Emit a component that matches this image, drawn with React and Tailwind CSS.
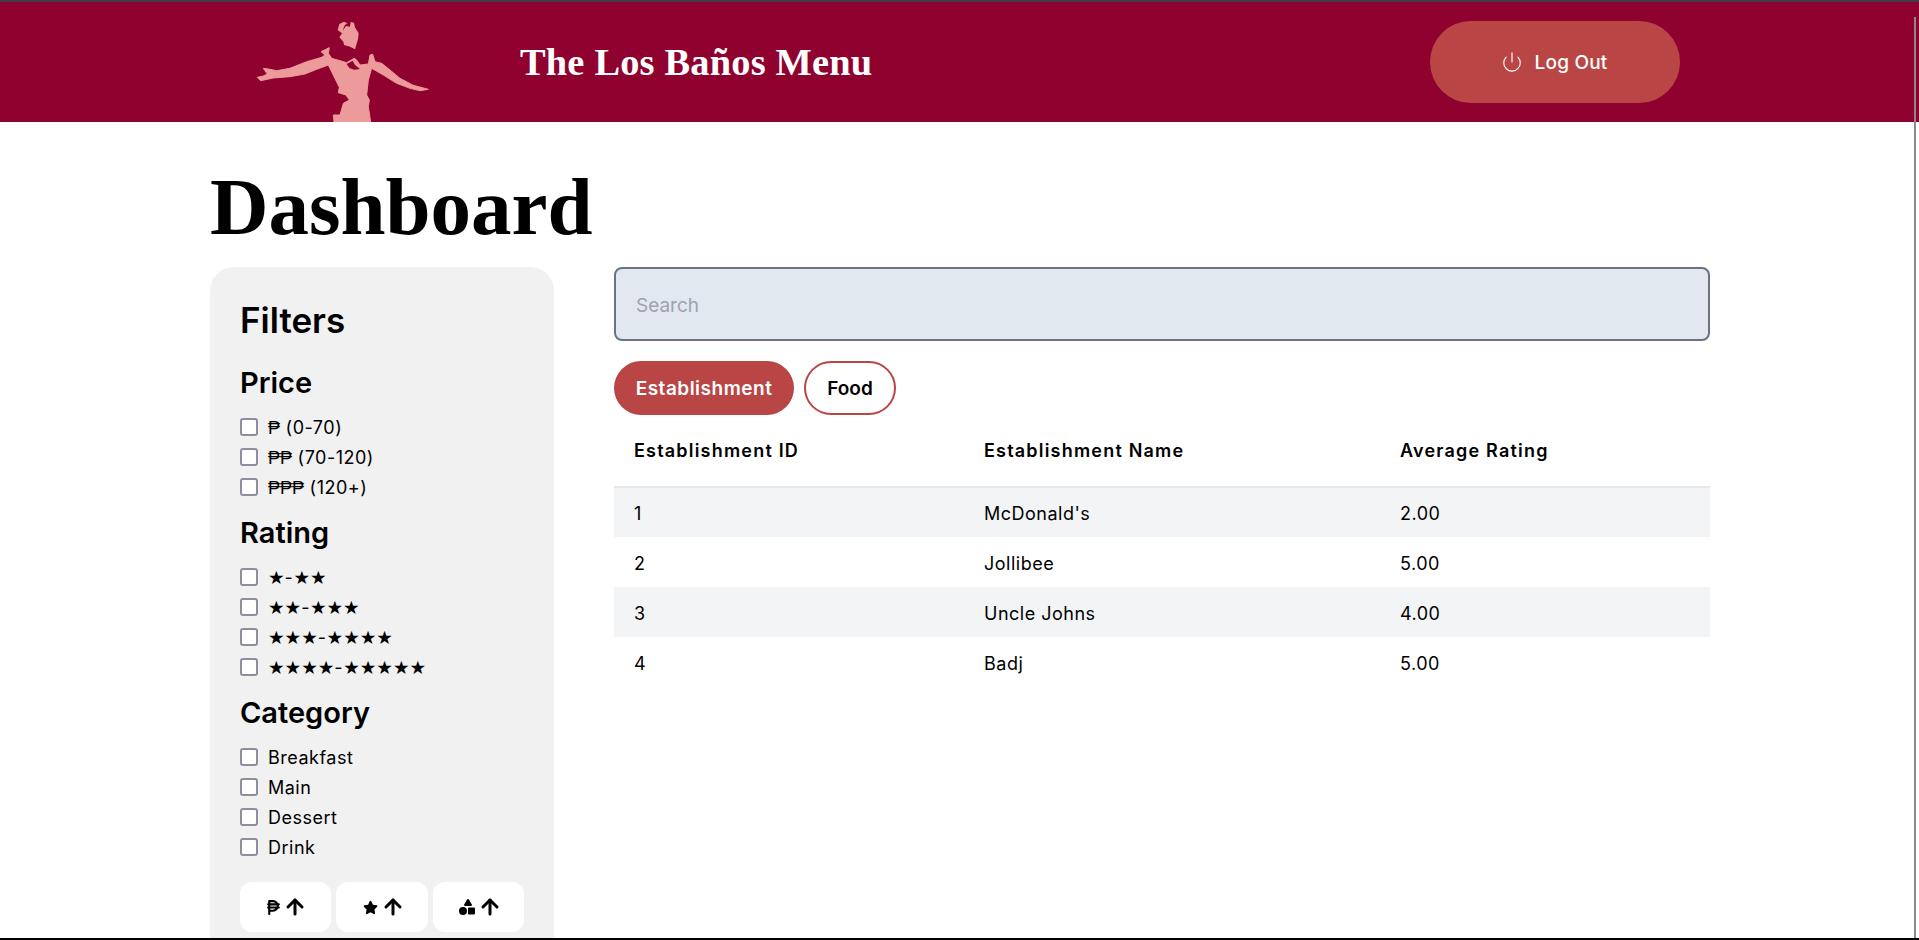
import { ArrowUp, Power } from 'lucide-react';
import { FaPesoSign, FaShapes, FaStar } from 'react-icons/fa6';

const rows = [
  { id: 1, name: "McDonald's", rating: '2.00' },
  { id: 2, name: 'Jollibee', rating: '5.00' },
  { id: 3, name: 'Uncle Johns', rating: '4.00' },
  { id: 4, name: 'Badj', rating: '5.00' },
];

function Statue() {
  return (
    <svg viewBox="0 6 630 360" className="h-[120px] w-[210px] shrink-0">
      <path
        fill="#ec9a9a"
        d="M293 90 L298 72 L312 65 L322 70 L314 76 L308 92 L318 78 L330 80 L332 66 L342 68 L345 82 L356 100 L354 118 L345 148 L330 140 L312 135 L310 125 L298 112 L306 100 Z"
      />
      <path
        fill="#ec9a9a"
        stroke="#ec9a9a"
        strokeWidth="3"
        d="M52 232 L70 228 L82 222 L70 205 L85 207 L110 212 L150 205 L200 185 L225 178 L245 172 L255 165 L243 155 L268 143 L265 160 L275 175 L300 182 L320 188 L342 175 L348 178 L360 195 L385 192 L390 165 L398 163 L405 185 L425 190 L450 210 L480 235 L520 256 L565 268 L540 272 L510 265 L470 250 L430 225 L395 205 L385 240 L380 285 L388 300 L385 320 L392 366 L282 366 L280 345 L300 345 L310 310 L328 300 L318 285 L295 278 L298 262 L265 195 L230 208 L195 222 L150 230 L100 234 L62 242 Z"
      />
      <path fill="#8f022f" d="M320 192 L338 182 L345 195 L360 207 L342 209 L328 204 Z" />
    </svg>
  );
}

function Check({ children }) {
  return (
    <label className="flex h-[30px] items-center gap-[10px] text-[18px] leading-[30px] tracking-[0.5px]">
      <span className="h-[18px] w-[18px] shrink-0 rounded-[3px] border-2 border-[#8f8d9f] bg-white" />
      <span className="pt-[2px]">{children}</span>
    </label>
  );
}

function Stars({ from, to }) {
  return (
    <span>
      <span className="font-['DejaVu_Sans',sans-serif] text-[18.5px] tracking-normal">{'★'.repeat(from)}</span>-
      <span className="font-['DejaVu_Sans',sans-serif] text-[18.5px] tracking-normal">{'★'.repeat(to)}</span>
    </span>
  );
}

function Peso({ count, label }) {
  return (
    <span>
      <span className="font-['Liberation_Sans',sans-serif] tracking-normal">{'₱'.repeat(count)}</span> {label}
    </span>
  );
}

function SortButton({ icon, className }) {
  return (
    <button className={`flex h-[50px] items-center justify-center gap-[6px] rounded-[12px] bg-white ${className}`}>
      {icon}
      <ArrowUp size={24} strokeWidth={3} className="-mx-[3px]" />
    </button>
  );
}

function FilterHeading({ children }) {
  return <h3 className="mt-[12px] mb-[12px] h-9 pt-[1px] text-[29px] leading-9 font-semibold">{children}</h3>;
}

export default function App() {
  return (
    <div className="h-screen overflow-hidden border-t-2 border-[#3f3f46] bg-white font-['Inter',sans-serif] text-black">
      <header className="flex h-[120px] items-center bg-[#8f022f] pl-[240px]">
        <Statue />
        <h1 className="ml-[70px] w-[910px] pt-[2px] font-['Liberation_Serif',serif] text-[38.4px] font-bold tracking-[0.2px] text-white">
          The Los Baños Menu
        </h1>
        <button className="flex h-[82px] w-[250px] items-center justify-center gap-3 rounded-[41px] bg-[#ba4545] text-[19px] font-medium tracking-[0.2px] text-white">
          <Power size={22} strokeWidth={1.25} className="-ml-[2px]" />
          <span className="pt-[3px]">Log Out</span>
        </button>
      </header>

      <main className="ml-[210px] w-[1500px]">
        <h2 className="flex h-[145px] items-center pt-[27px] font-['Liberation_Serif',serif] text-[81px] font-bold">
          Dashboard
        </h2>
        <div className="flex gap-[60px]">
          <aside className="w-[344px] shrink-0 rounded-3xl bg-[#f1f1f2] px-[30px] pt-[30px] pb-[30px]">
            <h2 className="h-10 pt-[3px] text-[35px] leading-10 font-semibold">Filters</h2>
            <h3 className="mt-[27px] mb-3 h-9 pt-[1px] text-[29px] leading-9 font-semibold">Price</h3>
            <Check><Peso count={1} label="(0-70)" /></Check>
            <Check><Peso count={2} label="(70-120)" /></Check>
            <Check><Peso count={3} label="(120+)" /></Check>
            <FilterHeading>Rating</FilterHeading>
            <Check><Stars from={1} to={2} /></Check>
            <Check><Stars from={2} to={3} /></Check>
            <Check><Stars from={3} to={4} /></Check>
            <Check><Stars from={4} to={5} /></Check>
            <FilterHeading>Category</FilterHeading>
            <Check>Breakfast</Check>
            <Check>Main</Check>
            <Check>Dessert</Check>
            <Check>Drink</Check>
            <div className="mt-5 flex gap-[5px]">
              <SortButton className="w-[91px]" icon={<FaPesoSign size={17} className="-mx-[2px]" />} />
              <SortButton className="w-[92px]" icon={<FaStar size={15} />} />
              <SortButton className="w-[91px]" icon={<FaShapes size={16} />} />
            </div>
          </aside>

          <section className="flex-1">
            <input
              placeholder="Search"
              className="h-[74px] w-full rounded-lg border-2 border-[#6b7280] bg-[#e2e8f0] px-5 pt-[2px] text-[19px] placeholder:text-[#9ca3af]"
            />
            <div className="mt-5 flex gap-[10px]">
              <button className="h-[54px] w-[180px] rounded-[27px] bg-[#ba4545] pt-[2px] text-[19px] font-semibold tracking-[0.5px] text-white">
                Establishment
              </button>
              <button className="h-[54px] w-[92px] rounded-[27px] border-2 border-[#ba4545] pt-[2px] text-[19px] font-semibold">
                Food
              </button>
            </div>
            <table className="w-full table-fixed border-collapse text-left text-[18px] tracking-[0.5px]">
              <colgroup>
                <col className="w-[350px]" />
                <col className="w-[416px]" />
                <col />
              </colgroup>
              <thead>
                <tr className="h-[72px] border-b-2 border-[#e5e7eb]">
                  <th className="px-5 font-semibold tracking-[1.2px]">Establishment ID</th>
                  <th className="px-5 font-semibold tracking-[1.2px]">Establishment Name</th>
                  <th className="px-5 font-semibold tracking-[1.2px]">Average Rating</th>
                </tr>
              </thead>
              <tbody>
                {rows.map((r) => (
                  <tr key={r.id} className="h-[50px] even:bg-white odd:bg-[#f3f4f6]">
                    <td className="px-5 pt-[2px]">{r.id}</td>
                    <td className="px-5 pt-[2px]">{r.name}</td>
                    <td className="px-5 pt-[2px]">{r.rating}</td>
                  </tr>
                ))}
              </tbody>
            </table>
          </section>
        </div>
      </main>

      {/* window edge: overlay scrollbar and bottom line */}
      <div className="fixed top-[17px] right-[3px] bottom-0 w-[2px] bg-[#8a8a8a]" />
      <div className="fixed right-0 bottom-0 left-0 h-[2px] bg-black" />
    </div>
  );
}
